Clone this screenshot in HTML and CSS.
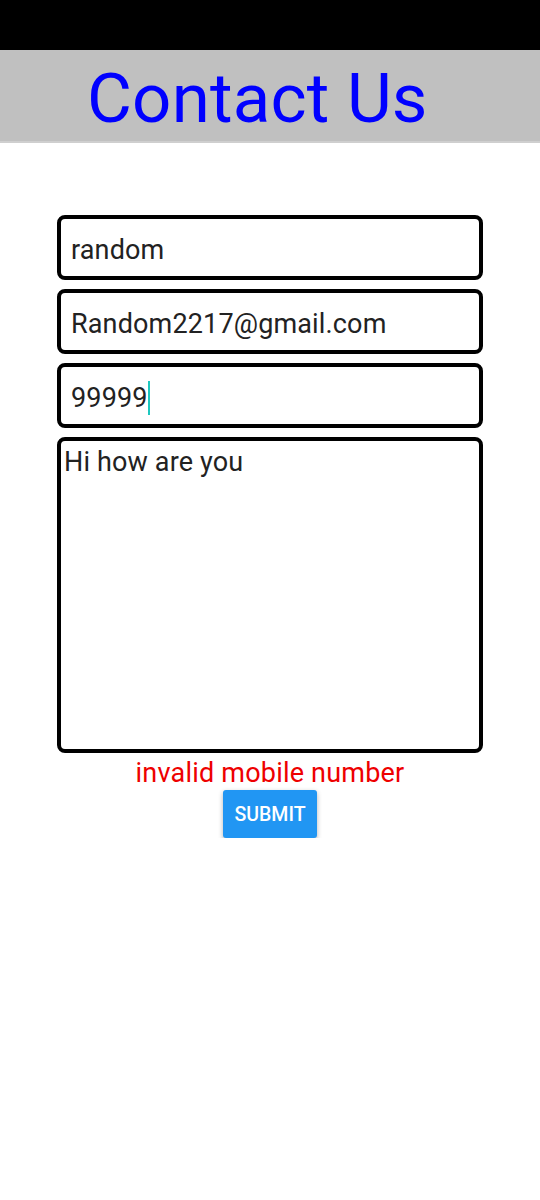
FILE: index.html
```html
<!DOCTYPE html>
<html>
<head>
<meta charset="utf-8">
<link rel="stylesheet" href="styles.css">
</head>
<body>
<div class="statusbar"></div>
<header class="header"><h1 class="title">Contact Us</h1></header>
<main class="form">
  <div class="field"><span class="value">random</span></div>
  <div class="field"><span class="value">Random2217@gmail.com</span></div>
  <div class="field"><span class="value">99999</span><span class="caret"></span></div>
  <div class="field area"><span class="value">Hi how are you</span></div>
  <p class="error">invalid mobile number</p>
  <button class="submit">SUBMIT</button>
</main>
</body>
</html>
```
FILE: styles.css
```css
html, body {
  margin: 0;
  padding: 0;
  background: #ffffff;
  font-family: Roboto, "Noto Sans", sans-serif;
}
.statusbar {
  height: 50px;
  background: #000000;
}
.header {
  height: 91px;
  background: #c0c0c0;
  border-bottom: 2px solid #cfcfcf;
  display: flex;
  align-items: center;
}
.title {
  margin: 0;
  padding-left: 87px;
  padding-top: 6px;
  font-family: Roboto, sans-serif;
  font-weight: 400;
  font-size: 69px;
  line-height: 80px;
  letter-spacing: 0.2px;
  color: #0000ff;
}
.form {
  margin: 72px 57px 0 57px;
  display: flex;
  flex-direction: column;
  align-items: stretch;
}
.field {
  box-sizing: border-box;
  height: 65px;
  border: 4px solid #000000;
  border-radius: 8px;
  margin-bottom: 9px;
  display: flex;
  align-items: center;
  padding: 4px 10px 0 10px;
}
.value {
  font-size: 27px;
  letter-spacing: 0.15px;
  color: #222222;
  line-height: 30px;
}
.caret {
  display: inline-block;
  width: 2px;
  height: 34px;
  background: #1ec8c0;
}
.field.area {
  height: 316px;
  align-items: flex-start;
  padding: 6px 4px 0 3px;
  margin-bottom: 4px;
}
.error {
  margin: 0;
  text-align: center;
  color: #ee0000;
  font-size: 27px;
  letter-spacing: 0.2px;
  line-height: 32px;
}
.submit {
  align-self: center;
  margin-top: 1px;
  height: 48px;
  width: 94px;
  border: none;
  border-radius: 3px;
  background: #2196f3;
  color: #ffffff;
  font-family: Roboto, sans-serif;
  font-weight: 500;
  font-size: 19.5px;
  box-shadow: 0 2px 5px rgba(0,0,0,0.3);
  padding: 0;
}
```
